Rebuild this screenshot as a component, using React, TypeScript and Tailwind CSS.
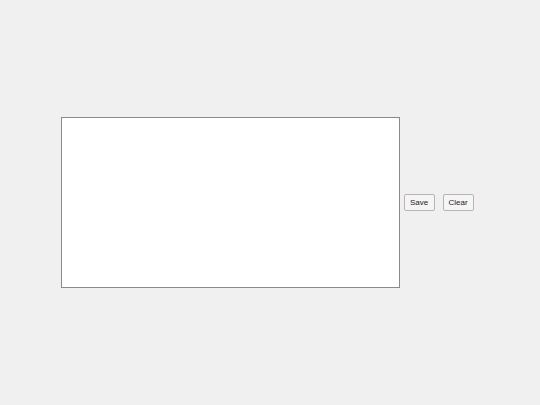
export default function App() {
  return (
    <div className="flex h-[405px] w-[540px] items-center justify-center bg-[#f0f0f0] font-['Liberation_Sans',Arial,sans-serif]">
      <div className="h-[171px] w-[339px] border border-[#8a8a8a] bg-white" />
      <button className="mx-1 h-[17px] w-[31px] rounded-[2px] border border-[#b5b5b5] bg-[#f5f5f5] text-[8px] text-[#222]">
        Save
      </button>
      <button className="ml-1 mr-[6px] h-[17px] w-[31px] rounded-[2px] border border-[#b5b5b5] bg-[#f5f5f5] text-[8px] text-[#222]">
        Clear
      </button>
    </div>
  )
}
